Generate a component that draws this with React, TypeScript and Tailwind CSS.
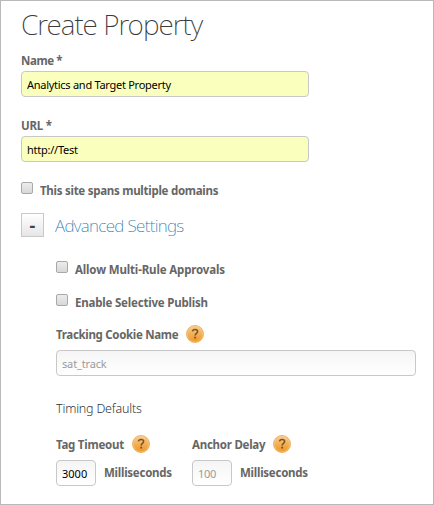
import React, { useState } from "react";

const inputBase =
  "block rounded-[4px] border border-[#c8c8c8] px-[5px] pt-px text-[11px] leading-[24px] outline-none placeholder:text-[#9b9b9b]";
const plain = inputBase + " bg-linear-to-b from-[#f5f5f5] to-white";
const label = "whitespace-nowrap text-[11.5px] leading-[16px] font-bold text-[#666]";

function Help() {
  return (
    <svg width="18" height="18" viewBox="0 0 18 18" className="block shrink-0">
      <defs>
        <linearGradient id="amber" x1="0" y1="0" x2="0" y2="1">
          <stop offset="0" stopColor="#f8cd94" />
          <stop offset="0.5" stopColor="#f3b057" />
          <stop offset="1" stopColor="#ef9420" />
        </linearGradient>
      </defs>
      <circle cx="9" cy="9" r="8.5" fill="url(#amber)" stroke="#eaa64f" strokeWidth="0.8" />
      <circle cx="9" cy="9" r="7.6" fill="none" stroke="#fbd7a4" strokeWidth="0.6" strokeOpacity="0.7" />
      <path d="M6.5 6.4C6.7 5 7.8 4.5 9.1 4.5c1.5 0 2.5.8 2.5 2 0 1.7-2.4 1.9-2.4 3.9" fill="none" stroke="#7d5520" strokeWidth="1.6" />
      <rect x="8.2" y="11.7" width="1.9" height="1.8" fill="#7d5520" />
    </svg>
  );
}

function Check({ text, spacing }: { text: string; spacing: string }) {
  const [on, setOn] = useState(false);
  return (
    <label className="flex h-[17px] items-start">
      <input
        type="checkbox"
        checked={on}
        onChange={() => setOn(!on)}
        className="h-3 w-3 shrink-0 appearance-none rounded-[2px] border border-[#a8a8a8] bg-linear-to-b from-[#ececec] to-[#d8d8d8] checked:bg-[#888]"
      />
      <span className={`${label} ml-[7px] mt-px ${spacing}`}>{text}</span>
    </label>
  );
}

export default function App() {
  return (
    <main className="h-[505px] w-[434px] overflow-hidden border border-[#b9b9b9] bg-white pl-[20px] font-['Noto_Sans','Open_Sans',sans-serif]">
      <h1 className="mt-[3px] h-[40px] whitespace-nowrap text-[28px] leading-[40px] font-extralight tracking-[-0.98px] text-[#3a3a3a]">
        Create Property
      </h1>
      <div className="mt-[9px]">
        <div className={`${label} tracking-[-0.4px]`}>Name *</div>
        <input aria-label="Name" defaultValue="Analytics and Target Property" className={`${inputBase} mt-[2px] h-[26px] w-[288px] bg-[#faffbd] tracking-[-0.27px] text-black`} />
      </div>
      <div className="mt-[21px]">
        <div className={`${label} tracking-[-0.2px]`}>URL *</div>
        <input aria-label="URL" defaultValue="http://Test" className={`${inputBase} mt-[2px] h-[26px] w-[288px] bg-[#faffbd] tracking-[-0.25px] text-black`} />
      </div>
      <div className="mt-[20px]">
        <Check text="This site spans multiple domains" spacing="tracking-[-0.27px]" />
      </div>
      <div className="mt-[14px] flex h-[24px] items-center">
        <button className="flex h-[24px] w-[23px] items-center justify-center border border-[#c9c9c9] bg-linear-to-b from-white to-[#e6e6e6] text-[18px] leading-[20px] font-bold text-[#444]">-</button>
        <h2 className="ml-[11px] mt-[2px] whitespace-nowrap text-[17px] leading-[24px] font-extralight tracking-[-0.63px] text-[#287eae]">Advanced Settings</h2>
      </div>
      <section className="ml-[35px] mt-[24px]">
        <Check text="Allow Multi-Rule Approvals" spacing="tracking-[-0.15px]" />
        <div className="mt-[16px]">
          <Check text="Enable Selective Publish" spacing="tracking-[-0.2px]" />
        </div>
        <div className="mt-[14px] flex h-[18px] items-center gap-[8px]">
          <span className={`${label} mt-[2px] tracking-[-0.32px]`}>Tracking Cookie Name</span>
          <Help />
        </div>
        <input aria-label="Tracking Cookie Name" placeholder="sat_track" className={`${plain} mt-[7px] h-[26px] w-[360px] tracking-[-0.15px]`} />
        <h3 className="mt-[23px] h-[18px] text-[12.5px] leading-[20px] font-light tracking-[-0.2px] text-[#333]">Timing Defaults</h3>
        <div className="mt-[18px] flex">
          <div className="w-[136px]">
            <div className="flex h-[18px] items-center gap-[8px]">
              <span className={`${label} mt-[2px] tracking-[-0.25px]`}>Tag Timeout</span>
              <Help />
            </div>
            <div className="mt-[7px] flex items-center gap-[8px]">
              <input aria-label="Tag Timeout" defaultValue="3000" className={`${plain} h-[26px] w-[40px] text-black`} />
              <span className={`${label} tracking-[-0.25px]`}>Milliseconds</span>
            </div>
          </div>
          <div>
            <div className="flex h-[18px] items-center gap-[8px]">
              <span className={`${label} mt-[2px] tracking-[-0.25px]`}>Anchor Delay</span>
              <Help />
            </div>
            <div className="mt-[7px] flex items-center gap-[8px]">
              <input aria-label="Anchor Delay" placeholder="100" className={`${plain} h-[26px] w-[40px] tracking-[-0.3px]`} />
              <span className={`${label} tracking-[-0.25px]`}>Milliseconds</span>
            </div>
          </div>
        </div>
      </section>
    </main>
  );
}
